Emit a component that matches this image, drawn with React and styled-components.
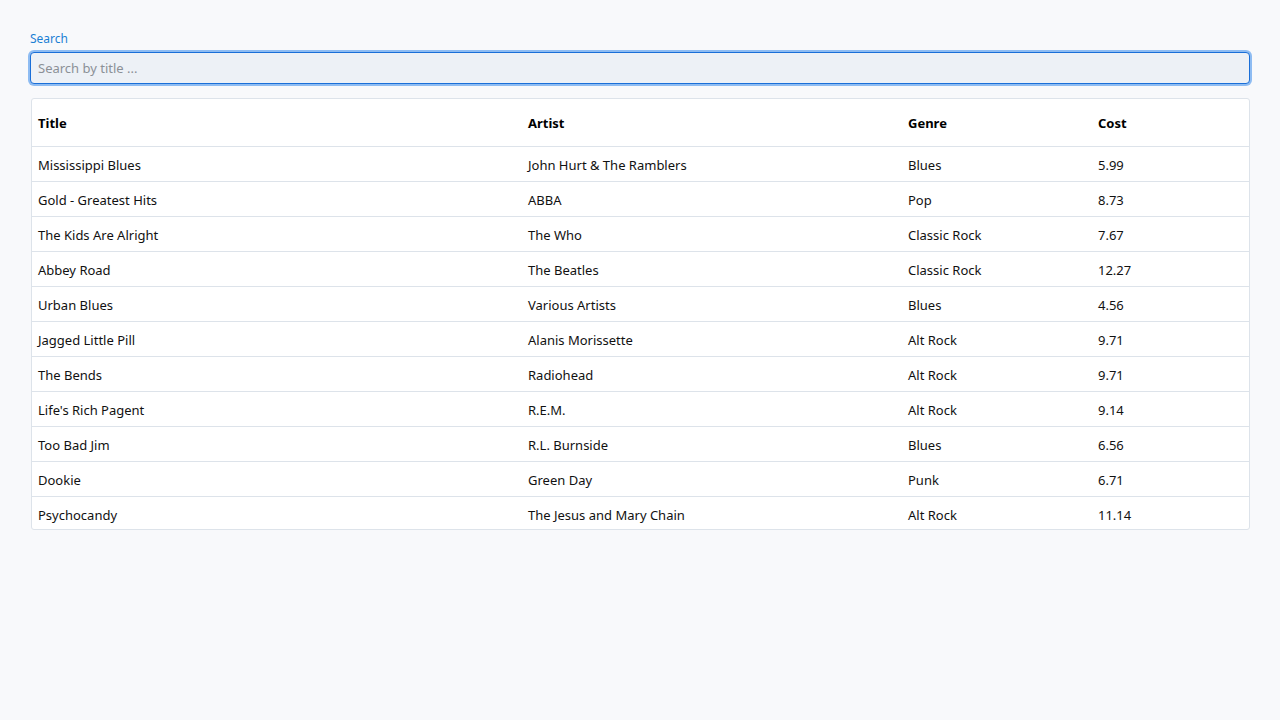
import React from "react";
import styled, { createGlobalStyle } from "styled-components";

const GlobalStyle = createGlobalStyle`
  html, body {
    margin: 0;
    padding: 0;
    background: #f8f9fb;
    font-family: "Noto Sans", "Open Sans", sans-serif;
    color: #111;
  }
  * { box-sizing: border-box; }
`;

const Page = styled.div`
  padding: 31px 30px 30px;
  min-height: 720px;
`;

const Label = styled.label`
  display: block;
  font-size: 12px;
  line-height: 16px;
  color: #1a7fd4;
  margin-bottom: 5px;
`;

const SearchInput = styled.input`
  display: block;
  width: 100%;
  height: 32px;
  padding: 0 7px;
  font-family: inherit;
  font-size: 13px;
  color: #222;
  background: #edf1f6;
  border: 1px solid #1a6fd8;
  border-radius: 4px;
  box-shadow: 0 0 0 2px #8ebcf2;
  outline: none;
  &::placeholder {
    color: #8b9096;
  }
`;

const TableBox = styled.div`
  margin: 14px 0 0 1px;
  height: 432px;
  overflow: hidden;
  background: #fff;
  border: 1px solid #dde3ea;
  border-radius: 3px;
`;

const Row = styled.div`
  display: grid;
  grid-template-columns: 490px 380px 190px 1fr;
  height: ${(p) => (p.$head ? "48px" : "35px")};
  align-items: center;
  border-bottom: 1px solid #dde3ea;
  font-size: 13px;
  font-weight: ${(p) => (p.$head ? 700 : 400)};
  color: ${(p) => (p.$head ? "#000" : "#111")};
`;

const Cell = styled.div`
  padding: ${(p) => (p.$head ? "0" : "2px")} 0 0 6px;
  white-space: nowrap;
`;

const albums = [
  ["Mississippi Blues", "John Hurt & The Ramblers", "Blues", "5.99"],
  ["Gold - Greatest Hits", "ABBA", "Pop", "8.73"],
  ["The Kids Are Alright", "The Who", "Classic Rock", "7.67"],
  ["Abbey Road", "The Beatles", "Classic Rock", "12.27"],
  ["Urban Blues", "Various Artists", "Blues", "4.56"],
  ["Jagged Little Pill", "Alanis Morissette", "Alt Rock", "9.71"],
  ["The Bends", "Radiohead", "Alt Rock", "9.71"],
  ["Life's Rich Pagent", "R.E.M.", "Alt Rock", "9.14"],
  ["Too Bad Jim", "R.L. Burnside", "Blues", "6.56"],
  ["Dookie", "Green Day", "Punk", "6.71"],
  ["Psychocandy", "The Jesus and Mary Chain", "Alt Rock", "11.14"],
];

const headings = ["Title", "Artist", "Genre", "Cost"];

export default function App() {
  return (
    <>
      <GlobalStyle />
      <Page>
        <Label htmlFor="search">Search</Label>
        <SearchInput id="search" placeholder="Search by title ..." />
        <TableBox>
          <Row $head>
            {headings.map((h) => (
              <Cell $head key={h}>
                {h}
              </Cell>
            ))}
          </Row>
          {albums.map((a) => (
            <Row key={a[0]}>
              {a.map((v, i) => (
                <Cell key={i}>{v}</Cell>
              ))}
            </Row>
          ))}
        </TableBox>
      </Page>
    </>
  );
}
